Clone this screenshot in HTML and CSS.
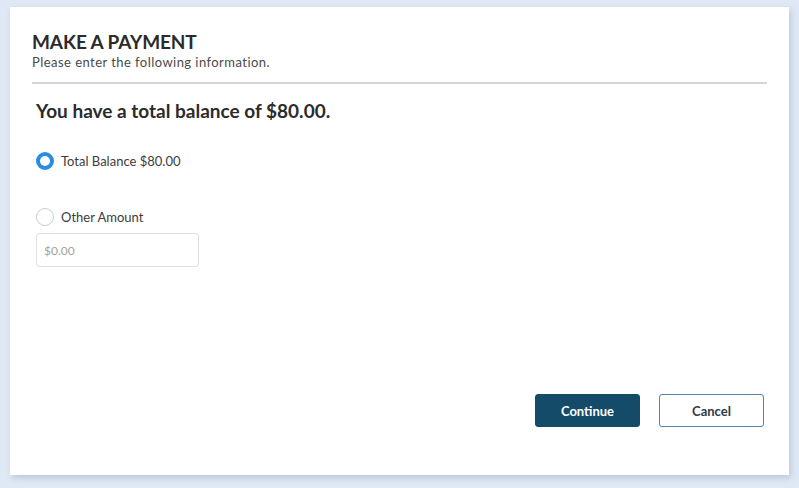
FILE: index.html
```html
<!DOCTYPE html>
<html>
<head>
<meta charset="utf-8">
<link rel="stylesheet" href="styles.css">
</head>
<body>
<div class="card">
  <div class="header">
    <h1 class="title">MAKE A PAYMENT</h1>
    <p class="subtitle">Please enter the following information.</p>
  </div>
  <div class="content">
    <h2 class="balance">You have a total balance of $80.00.</h2>
    <label class="option option-total">
      <span class="radio checked"></span>
      <span class="label-text">Total Balance $80.00</span>
    </label>
    <label class="option option-other">
      <span class="radio"></span>
      <span class="label-text">Other Amount</span>
    </label>
    <div class="amount-input">$0.00</div>
  </div>
  <div class="actions">
    <button class="btn btn-primary">Continue</button>
    <button class="btn btn-secondary">Cancel</button>
  </div>
</div>
</body>
</html>
```
FILE: styles.css
```css
html, body {
  margin: 0;
  padding: 0;
}
body {
  background: #dfe9f5;
  font-family: Lato, "Open Sans", sans-serif;
  color: #2b2b2b;
  padding: 7px 10px 13px 10px;
  box-sizing: border-box;
  height: 488px;
  overflow: hidden;
}
.card {
  background: #fff;
  width: 779px;
  height: 468px;
  box-sizing: border-box;
  padding: 24px 22px 0 22px;
  display: flex;
  flex-direction: column;
  box-shadow: 2px 3px 6px rgba(120, 140, 170, 0.35);
}
.header {
  border-bottom: 2px solid #d3d7dc;
  padding-bottom: 11px;
}
.title {
  margin: 0;
  font-size: 19px;
  font-weight: 700;
  line-height: 22px;
  color: #2b2b2b;
  letter-spacing: -0.1px;
}
.subtitle {
  margin: 0;
  font-size: 13px;
  line-height: 18px;
  color: #4a4a4a;
  letter-spacing: 0.45px;
}
.content {
  padding-left: 4px;
  display: flex;
  flex-direction: column;
  align-items: flex-start;
}
.balance {
  margin: 14px 0 0 0;
  font-size: 19px;
  font-weight: 700;
  line-height: 26px;
  color: #2b2b2b;
}
.option {
  display: flex;
  align-items: center;
  gap: 7px;
  font-size: 13px;
  color: #3c3c3c;
  height: 20px;
}
.option-total {
  margin-top: 27px;
}
.option-other {
  margin-top: 36px;
}
.radio {
  width: 18px;
  height: 18px;
  box-sizing: border-box;
  border-radius: 50%;
  border: 1.5px solid #c7ccd2;
  background: #fff;
}
.radio.checked {
  border: 4px solid #2a8de4;
}
.amount-input {
  margin-top: 6px;
  width: 163px;
  height: 34px;
  box-sizing: border-box;
  border: 1px solid #dcdfe3;
  border-radius: 3px;
  font-size: 12px;
  color: #a3a3a3;
  padding-left: 7px;
  display: flex;
  align-items: center;
}
.actions {
  margin-top: auto;
  margin-bottom: 48px;
  display: flex;
  justify-content: flex-end;
  gap: 19px;
  padding-right: 3px;
}
.btn {
  width: 105px;
  height: 33px;
  box-sizing: border-box;
  border-radius: 3px;
  font-family: Lato, "Open Sans", sans-serif;
  font-size: 13px;
  font-weight: 700;
  cursor: pointer;
}
.btn-primary {
  background: #134b69;
  border: 1px solid #134b69;
  color: #fff;
}
.btn-secondary {
  background: #fff;
  border: 1px solid #4f86a8;
  color: #2f3a44;
}
```
